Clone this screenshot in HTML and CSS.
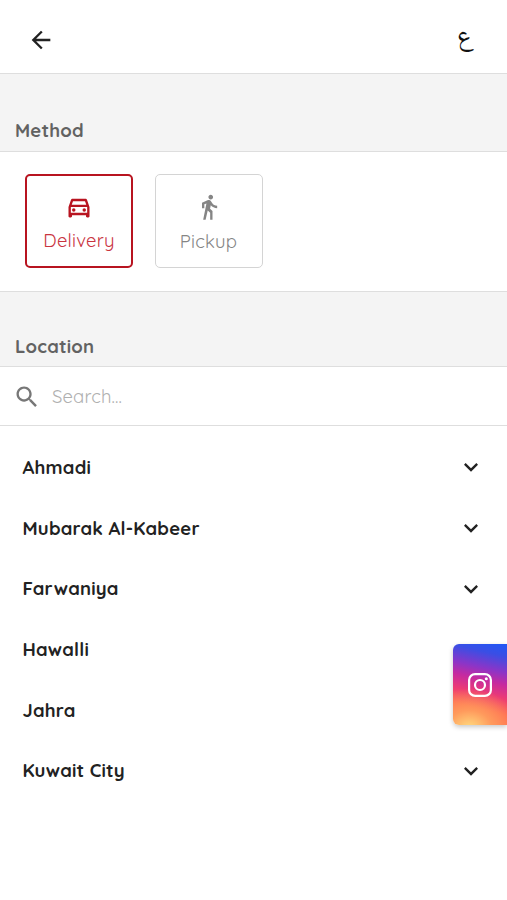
FILE: index.html
```html
<!DOCTYPE html>
<html lang="en">
<head>
<meta charset="utf-8">
<meta name="viewport" content="width=device-width, initial-scale=1">
<title>Method and location</title>
<link rel="stylesheet" href="styles.css">
</head>
<body>
<header class="topbar">
  <svg class="icon" viewBox="0 0 24 24"><path d="M20 11H7.83l5.59-5.59L12 4l-8 8 8 8 1.41-1.41L7.83 13H20v-2z"/></svg>
  <span class="lang" lang="ar">ع</span>
</header>
<main>
  <h2 class="heading heading-method">Method</h2>
  <section class="methods">
    <div class="method selected">
      <svg class="icon" viewBox="0 0 24 24"><path d="M18.92 6.01C18.72 5.42 18.16 5 17.5 5h-11c-.66 0-1.21.42-1.42 1.01L3 12v8c0 .55.45 1 1 1h1c.55 0 1-.45 1-1v-1h12v1c0 .55.45 1 1 1h1c.55 0 1-.45 1-1v-8l-2.08-5.99zM6.85 7h10.29l1.08 3.11H5.77L6.85 7zM19 17H5v-5h14v5z"/><circle cx="7.5" cy="14.5" r="1.5"/><circle cx="16.5" cy="14.5" r="1.5"/></svg>
      <span>Delivery</span>
    </div>
    <div class="method">
      <svg class="icon" viewBox="0 0 24 24"><path d="M13.5 5.5c1.1 0 2-.9 2-2s-.9-2-2-2-2 .9-2 2 .9 2 2 2zM9.8 8.9L7 23h2.1l1.8-8 2.1 2v6h2v-7.5l-2.1-2 .6-3C14.8 12 16.8 13 19 13v-2c-1.9 0-3.5-1-4.3-2.4l-1-1.6c-.4-.6-1-1-1.7-1-.3 0-.5.1-.8.1L6 8.3V13h2V9.6l1.8-.7"/></svg>
      <span>Pickup</span>
    </div>
  </section>
  <h2 class="heading heading-location">Location</h2>
  <div class="search">
    <svg class="icon" viewBox="0 0 24 24"><path d="M15.5 14h-.79l-.28-.27C15.41 12.59 16 11.11 16 9.5 16 5.91 13.09 3 9.5 3S3 5.91 3 9.5 5.91 16 9.5 16c1.61 0 3.09-.59 4.23-1.57l.27.28v.79l5 4.99L20.49 19l-4.99-5zm-6 0C7.01 14 5 11.99 5 9.5S7.01 5 9.5 5 14 7.01 14 9.5 11.99 14 9.5 14z"/></svg>
    <span>Search...</span>
  </div>
  <ul class="areas">
    <li><span>Ahmadi</span><svg class="icon" viewBox="0 0 24 24"><path d="M16.59 8.59L12 13.17 7.41 8.59 6 10l6 6 6-6z"/></svg></li>
    <li><span>Mubarak Al-Kabeer</span><svg class="icon" viewBox="0 0 24 24"><path d="M16.59 8.59L12 13.17 7.41 8.59 6 10l6 6 6-6z"/></svg></li>
    <li><span>Farwaniya</span><svg class="icon" viewBox="0 0 24 24"><path d="M16.59 8.59L12 13.17 7.41 8.59 6 10l6 6 6-6z"/></svg></li>
    <li><span>Hawalli</span></li>
    <li><span>Jahra</span></li>
    <li><span>Kuwait City</span><svg class="icon" viewBox="0 0 24 24"><path d="M16.59 8.59L12 13.17 7.41 8.59 6 10l6 6 6-6z"/></svg></li>
  </ul>
</main>
<a class="instagram" aria-label="Instagram">
  <svg viewBox="0 0 24 24"><rect x="1.1" y="1.1" width="21.8" height="21.8" rx="6"/><circle cx="12" cy="12" r="5"/><circle class="dot" cx="18.3" cy="5.7" r="1.5"/></svg>
</a>
</body>
</html>
```

FILE: styles.css
```css
* { box-sizing: border-box; }
body {
  margin: 0;
  background: #fff;
  color: #222;
  font-family: Quicksand, Inter, "Open Sans", sans-serif;
  font-size: 18.5px;
  line-height: 24px;
}
.icon { width: 28px; height: 28px; fill: currentColor; flex: none; display: block; }
.topbar {
  height: 74px;
  padding: 6px 34px 0 27px;
  display: flex;
  align-items: center;
  justify-content: space-between;
  border-bottom: 1px solid #dedede;
}
.lang {
  padding-bottom: 3px;
  font-family: "Noto Naskh Arabic", Amiri, "DejaVu Sans", sans-serif;
  font-size: 27px;
  color: #111;
}
.heading {
  margin: 0;
  padding: 0 15px 9px;
  display: flex;
  align-items: flex-end;
  background: #f4f4f4;
  border-bottom: 1px solid #dedede;
  color: #626262;
  font-size: 18.5px;
  font-weight: 700;
  letter-spacing: .2px;
}
.heading-method { height: 78px; }
.heading-location { height: 75px; padding-bottom: 8px; }
.methods {
  height: 140px;
  padding: 22px 25px;
  display: flex;
  gap: 21.5px;
  border-bottom: 1px solid #dedede;
}
.method {
  width: 108px;
  height: 94px;
  padding-top: 18px;
  border: 1px solid #d4d4d4;
  border-radius: 5px;
  display: flex;
  flex-direction: column;
  align-items: center;
  gap: 8px;
  color: #858585;
  font-weight: 400;
  font-size: 18.5px;
  letter-spacing: .2px;
}
.method.selected {
  padding-top: 16.5px;
  gap: 7.5px;
  border: 2px solid #b81420;
  color: #b81420;
}
.method.selected span { color: #c9343f; }
.search {
  height: 59px;
  padding: 1px 13px 0;
  display: flex;
  align-items: center;
  gap: 11px;
  border-bottom: 1px solid #dedede;
  color: #777;
}
.search span { padding-bottom: 2px; color: #b0b0b0; font-weight: 400; letter-spacing: .1px; }
.areas {
  list-style: none;
  margin: 0;
  padding: 11px 22px 0 22.5px;
  font-weight: 700;
  letter-spacing: .2px;
}
.areas li {
  height: 60.7px;
  display: flex;
  align-items: center;
  justify-content: space-between;
}
.areas span { padding-bottom: 1px; }
.instagram {
  position: fixed;
  right: 0;
  top: 644px;
  width: 54px;
  height: 81px;
  border-radius: 6px 0 0 6px;
  display: flex;
  align-items: center;
  justify-content: center;
  background:
    radial-gradient(ellipse 50px 40px at 30% 104%, #ffdc80 0%, rgba(255, 165, 95, .8) 45%, rgba(255, 110, 80, 0) 100%),
    linear-gradient(193deg, #1f58f6 0%, #3b4ee4 14%, #8a35c8 31%, #c52aa0 44%, #ec3b74 59%, #ff6550 76%, #ff7a50 100%);
  box-shadow: 0 2px 5px rgba(0, 0, 0, .22);
}
.instagram svg { width: 24px; height: 24px; fill: none; stroke: #fff; stroke-width: 2.2; }
.instagram .dot { fill: #fff; stroke: none; }
```
